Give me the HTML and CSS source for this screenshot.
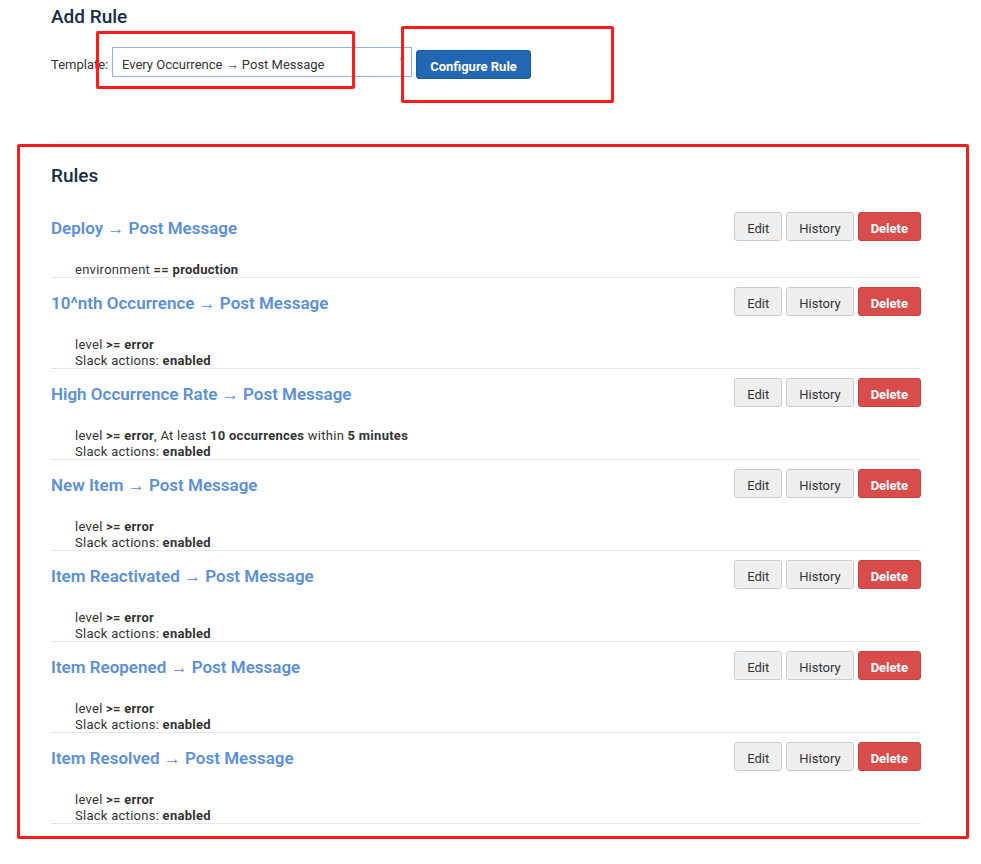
FILE: index.html
```html
<!DOCTYPE html>
<html>
<head>
<meta charset="utf-8">
<link rel="stylesheet" href="styles.css">
</head>
<body>
<div class="page">
  <h2 class="heading add-heading">Add Rule</h2>
  <div class="template-row">
    <label class="template-label">Template:</label>
    <div class="select">
      <span class="select-text">Every Occurrence → Post Message</span>
      <span class="select-arrow">▾</span>
    </div>
    <button class="btn-primary">Configure Rule</button>
  </div>
  <div class="divider"></div>

  <h2 class="heading rules-heading">Rules</h2>
  <div class="rules">
    <div class="rule">
      <div class="rule-head">
        <a class="rule-title">Deploy → Post Message</a>
        <div class="actions"><button class="btn">Edit</button><button class="btn">History</button><button class="btn btn-danger">Delete</button></div>
      </div>
      <div class="rule-details">
        <div>environment <b>== production</b></div>
      </div>
    </div>
    <div class="rule">
      <div class="rule-head">
        <a class="rule-title">10^nth Occurrence → Post Message</a>
        <div class="actions"><button class="btn">Edit</button><button class="btn">History</button><button class="btn btn-danger">Delete</button></div>
      </div>
      <div class="rule-details">
        <div>level <b>&gt;= error</b></div>
        <div>Slack actions: <b>enabled</b></div>
      </div>
    </div>
    <div class="rule">
      <div class="rule-head">
        <a class="rule-title">High Occurrence Rate → Post Message</a>
        <div class="actions"><button class="btn">Edit</button><button class="btn">History</button><button class="btn btn-danger">Delete</button></div>
      </div>
      <div class="rule-details">
        <div>level <b>&gt;= error</b>, At least <b>10 occurrences</b> within <b>5 minutes</b></div>
        <div>Slack actions: <b>enabled</b></div>
      </div>
    </div>
    <div class="rule">
      <div class="rule-head">
        <a class="rule-title">New Item → Post Message</a>
        <div class="actions"><button class="btn">Edit</button><button class="btn">History</button><button class="btn btn-danger">Delete</button></div>
      </div>
      <div class="rule-details">
        <div>level <b>&gt;= error</b></div>
        <div>Slack actions: <b>enabled</b></div>
      </div>
    </div>
    <div class="rule">
      <div class="rule-head">
        <a class="rule-title">Item Reactivated → Post Message</a>
        <div class="actions"><button class="btn">Edit</button><button class="btn">History</button><button class="btn btn-danger">Delete</button></div>
      </div>
      <div class="rule-details">
        <div>level <b>&gt;= error</b></div>
        <div>Slack actions: <b>enabled</b></div>
      </div>
    </div>
    <div class="rule">
      <div class="rule-head">
        <a class="rule-title">Item Reopened → Post Message</a>
        <div class="actions"><button class="btn">Edit</button><button class="btn">History</button><button class="btn btn-danger">Delete</button></div>
      </div>
      <div class="rule-details">
        <div>level <b>&gt;= error</b></div>
        <div>Slack actions: <b>enabled</b></div>
      </div>
    </div>
    <div class="rule">
      <div class="rule-head">
        <a class="rule-title">Item Resolved → Post Message</a>
        <div class="actions"><button class="btn">Edit</button><button class="btn">History</button><button class="btn btn-danger">Delete</button></div>
      </div>
      <div class="rule-details">
        <div>level <b>&gt;= error</b></div>
        <div>Slack actions: <b>enabled</b></div>
      </div>
    </div>
  </div>
</div>

<div class="mark mark-select"></div>
<div class="mark mark-button"></div>
<div class="mark mark-rules"></div>
</body>
</html>
```

FILE: styles.css
```css
* { box-sizing: border-box; }

html, body {
  margin: 0;
  background: #ffffff;
}

body {
  position: relative;
  font-family: Roboto, "Liberation Sans", Arial, sans-serif;
  color: #333333;
  font-size: 13px;
  min-height: 864px;
}

.page {
  padding: 0 60px 0 51px;
}

.heading {
  margin: 0;
  font-size: 19px;
  line-height: 20px;
  font-weight: 500;
  color: #182c4b;
}

.add-heading {
  padding-top: 7px;
}

.template-row {
  display: flex;
  align-items: flex-start;
  margin-top: 20px;
}

.template-label {
  font-size: 13px;
  line-height: 28px;
  padding-top: 4px;
  margin-right: 3px;
  width: 58px;
  color: #333;
}

.select {
  width: 300px;
  height: 30px;
  border: 1px solid #8fb2ea;
  display: flex;
  align-items: center;
  justify-content: space-between;
  padding: 5px 6px 0 9px;
  font-size: 13px;
  color: #333;
}

.select-arrow {
  font-size: 9px;
  color: #555;
  margin-top: -10px;
}

.btn-primary {
  margin-top: 3px;
  margin-left: 4px;
  height: 29px;
  padding: 4px 12px 0;
  width: 115px;
  border: 1px solid #1c5ea3;
  border-radius: 3px;
  background: #2167b1;
  color: #ffffff;
  font-family: inherit;
  font-size: 13px;
  font-weight: 700;
}

.divider {
  margin-top: 62px;
  border-top: 1px solid #eeeeee;
}

.rules-heading {
  margin-top: 24px;
}

.rules {
  margin-top: 17px;
}

.rule {
  padding-top: 9px;
  border-bottom: 1px solid #e6e6e6;
}

.rule-head {
  display: flex;
  align-items: center;
  justify-content: space-between;
  height: 29px;
}

.rule-title {
  font-size: 17px;
  font-weight: 600;
  padding-top: 3px;
  color: #5b8fd8;
  text-decoration: none;
}

.actions {
  display: flex;
  gap: 4px;
}

.btn {
  height: 29px;
  padding: 3px 12px 0;
  border: 1px solid #cccccc;
  border-radius: 3px;
  background: #efefef;
  color: #333333;
  font-family: inherit;
  font-size: 13px;
}

.btn-danger {
  background: #d94c4c;
  border-color: #c94040;
  color: #ffffff;
  font-weight: 700;
}

.rule-details {
  margin-top: 20px;
  margin-bottom: -1px;
  padding: 1px 0 0 24px;
  font-size: 13px;
  line-height: 16px;
  letter-spacing: 0.27px;
  color: #333333;
}

.rule-details b {
  font-weight: 700;
}

.mark {
  position: absolute;
  border: 3px solid #fe1b1b;
  border-radius: 2px;
  pointer-events: none;
}

.mark-select {
  left: 96px;
  top: 31px;
  width: 259px;
  height: 58px;
}

.mark-button {
  left: 401px;
  top: 26px;
  width: 213px;
  height: 77px;
}

.mark-rules {
  left: 17px;
  top: 144px;
  width: 952px;
  height: 695px;
}
```
